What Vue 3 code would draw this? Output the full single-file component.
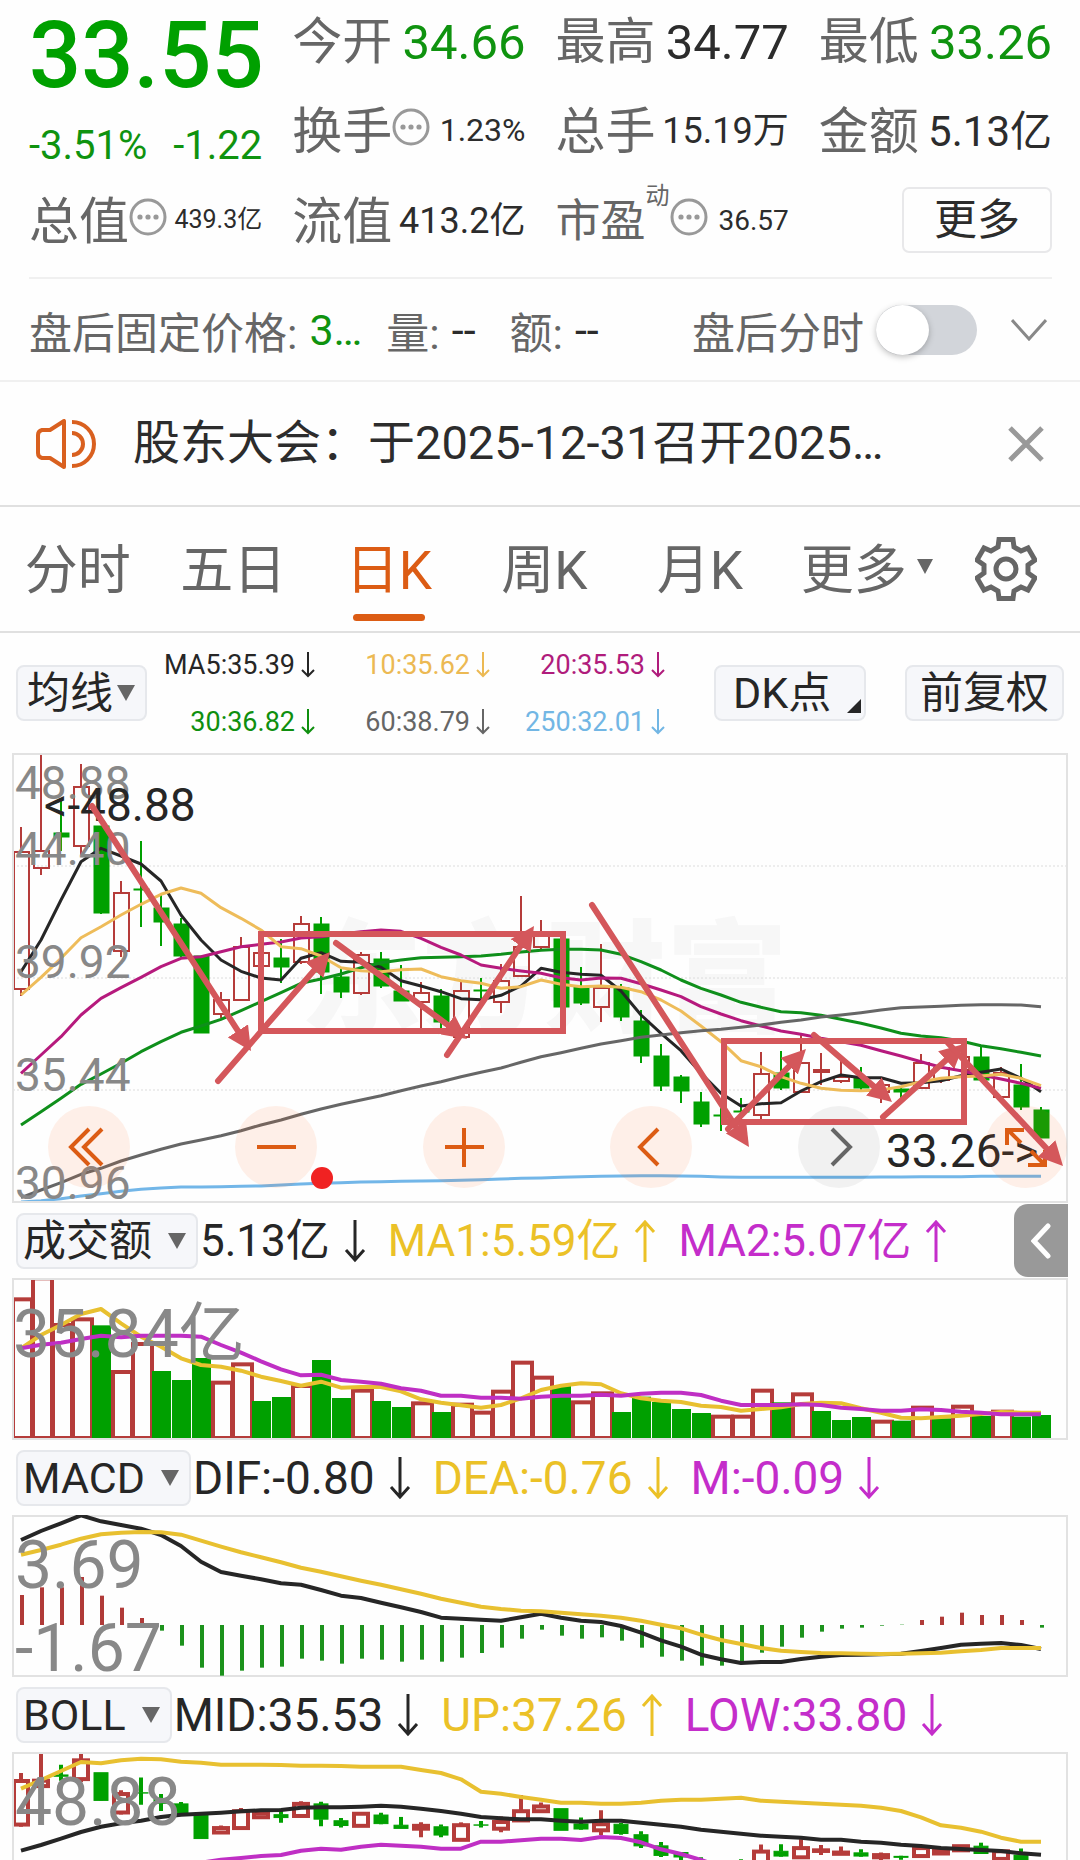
<script setup>
import { ref } from 'vue'

const stepX = (i) => 21 + 20 * i
const line = (values, top) =>
  values.map((v, i) => `${stepX(i)},${(top + v / 3).toFixed(1)}`).join(' ')

const quotes = [
  { label: '今开', value: '34.66', size: 'xl', down: true },
  { label: '最高', value: '34.77', size: 'xl' },
  { label: '最低', value: '33.26', size: 'xl', down: true },
  { label: '换手', value: '1.23%', size: 'm', info: true },
  { label: '总手', value: '15.19万', size: 'l' },
  { label: '金额', value: '5.13亿', size: 'ml' },
  { label: '总值', value: '439.3亿', size: 's', info: true },
  { label: '流值', value: '413.2亿', size: 'l' },
  { label: '市盈', value: '36.57', size: 'sm', info: true, sup: '动' },
]

const afterHours = ref(false)
const tabs = ['分时', '五日', '日K', '周K', '月K']
const activeTab = ref('日K')

const averages = [
  { text: 'MA5:35.39', color: '#262626' },
  { text: '10:35.62', color: '#ecb953' },
  { text: '20:35.53', color: '#b01c7c' },
  { text: '30:36.82', color: '#0f8f0f' },
  { text: '60:38.79', color: '#666666' },
  { text: '250:32.01', color: '#72b6e4' },
]

// [rising, high, body top, body bottom, low]
const candles = [
  [1, 827, 852, 989, 996], [1, 754, 851, 868, 875], [0, 801, 833, 837, 851], [1, 764, 787, 846, 855],
  [0, 826, 826, 913, 914], [1, 881, 893, 951, 957], [0, 841, 889, 890, 927], [0, 893, 908, 922, 946],
  [0, 918, 924, 956, 957], [0, 956, 956, 1033, 1033], [1, 992, 1000, 1014, 1018], [1, 937, 947, 1000, 1000],
  [1, 948, 953, 966, 968], [0, 939, 958, 967, 983], [1, 916, 924, 962, 964], [0, 917, 924, 972, 994],
  [0, 968, 977, 992, 998], [1, 952, 955, 993, 995], [0, 952, 959, 986, 988], [0, 965, 991, 1001, 1001],
  [1, 982, 993, 1002, 1029], [0, 989, 996, 1022, 1029], [1, 982, 991, 1037, 1037], [0, 978, 990, 991, 998],
  [1, 964, 981, 1002, 1013], [1, 896, 947, 976, 976], [1, 920, 932, 947, 949], [0, 939, 939, 1007, 1007],
  [0, 967, 987, 1003, 1005], [1, 944, 988, 1007, 1022], [0, 984, 988, 1017, 1021], [0, 1010, 1021, 1056, 1063],
  [0, 1044, 1056, 1086, 1091], [0, 1075, 1077, 1091, 1103], [0, 1092, 1102, 1124, 1127], [0, 1105, 1115, 1116, 1131],
  [0, 1098, 1111, 1112, 1122], [1, 1052, 1074, 1115, 1119], [0, 1051, 1073, 1088, 1090], [1, 1035, 1063, 1092, 1093],
  [1, 1053, 1070, 1072, 1085], [1, 1058, 1077, 1081, 1083], [0, 1067, 1078, 1088, 1090], [1, 1077, 1085, 1092, 1103],
  [0, 1087, 1089, 1092, 1100], [1, 1054, 1063, 1088, 1088], [1, 1065, 1068, 1080, 1083], [1, 1055, 1057, 1070, 1070],
  [0, 1046, 1057, 1080, 1080], [1, 1067, 1073, 1097, 1097], [0, 1064, 1085, 1107, 1110], [0, 1107, 1110, 1138, 1138],
].map(([up, ...y]) => ({ up, y }))
const bollCandles = candles.map((c) => ({ up: c.up, y: c.y.map((v) => 1781 + (v - 852) * 0.318) }))

const priceLines = [
  { color: '#262626', v: [695, 600, 480, 365, 325, 348, 372, 423, 525, 600, 660, 694, 714, 720, 655, 638, 664, 667, 682, 722, 738, 755, 776, 779, 766, 738, 685, 697, 703, 706, 753, 825, 880, 932, 1000, 1060, 1098, 1091, 1088, 1053, 1025, 1005, 1013, 1013, 1030, 1028, 1022, 1007, 997, 987, 1015, 1055] },
  { color: '#0f8f1b', v: [1155, 1115, 1075, 1033, 1002, 970, 935, 905, 877, 858, 838, 812, 785, 758, 730, 717, 702, 683, 668, 660, 653, 652, 650, 648, 643, 636, 631, 628, 628, 630, 643, 665, 690, 720, 745, 765, 787, 802, 815, 818, 826, 838, 850, 864, 880, 888, 893, 903, 917, 926, 937, 948] },
  { color: '#b61a7d', v: [1000, 945, 890, 825, 775, 743, 712, 680, 655, 650, 635, 620, 613, 606, 594, 590, 582, 575, 570, 574, 595, 622, 645, 675, 685, 693, 700, 713, 720, 714, 715, 731, 750, 770, 800, 822, 842, 858, 873, 883, 895, 905, 916, 932, 948, 965, 982, 992, 1005, 1017, 1030, 1045] },
  { color: '#eebc5a', v: [765, 712, 655, 593, 560, 525, 493, 463, 444, 460, 503, 535, 570, 620, 626, 648, 683, 692, 695, 689, 687, 710, 722, 730, 745, 740, 720, 733, 740, 738, 742, 755, 780, 813, 858, 905, 962, 980, 1010, 1030, 1045, 1051, 1052, 1050, 1040, 1025, 1015, 1010, 1008, 1003, 1015, 1037] },
  { color: '#666666', v: [1373, 1350, 1328, 1303, 1285, 1263, 1245, 1228, 1212, 1200, 1187, 1172, 1155, 1140, 1123, 1107, 1093, 1080, 1067, 1052, 1038, 1025, 1010, 997, 984, 967, 950, 938, 925, 912, 902, 892, 885, 878, 872, 868, 862, 855, 847, 840, 831, 825, 818, 810, 803, 801, 799, 796, 794, 794, 795, 800] },
  { color: '#72b6e8', v: [1386, 1382, 1376, 1368, 1361, 1354, 1348, 1344, 1341, 1341, 1340, 1339, 1338, 1335, 1332, 1330, 1328, 1326, 1325, 1324, 1323, 1322, 1321, 1319, 1317, 1315, 1314, 1312, 1310, 1309, 1308, 1307, 1307, 1308, 1309, 1311, 1312, 1312, 1312, 1312, 1312, 1312, 1312, 1311, 1311, 1310, 1310, 1310, 1309, 1309, 1309, 1309] },
]
const priceScale = [
  ['48.88', 799], ['44.40', 865], ['39.92', 978], ['35.44', 1091], ['30.96', 1199],
]

const risingVolume = new Set([0, 1, 2, 3, 5, 6, 10, 11, 14, 17, 20, 22, 23, 24, 25, 26, 28, 29, 35, 36, 37, 39, 43, 45, 47, 49])
const volumes = [298, 235, 375, 358, 376, 516, 432, 513, 540, 474, 548, 493, 603, 591, 558, 480, 594, 572, 603, 621, 610, 636, 614, 638, 575, 488, 533, 558, 607, 580, 636, 590, 606, 627, 639, 650, 650, 572, 607, 583, 633, 660, 651, 665, 662, 623, 655, 620, 648, 635, 650, 645]
  .map((v, i) => ({ up: risingVolume.has(i), top: 1200 + v / 3 }))
const volumeLines = [
  { color: '#e8c030', v: [445, 405, 375, 342, 327, 370, 410, 440, 475, 495, 500, 512, 530, 543, 557, 545, 563, 561, 561, 574, 598, 608, 616, 623, 615, 595, 570, 557, 550, 553, 580, 595, 602, 606, 617, 621, 632, 627, 622, 612, 608, 610, 625, 638, 653, 655, 651, 647, 642, 636, 638, 638] },
  { color: '#bf2fc4', v: [445, 434, 428, 417, 407, 412, 407, 407, 407, 410, 435, 458, 484, 508, 526, 524, 540, 545, 551, 565, 572, 587, 587, 593, 593, 596, 590, 587, 587, 584, 587, 581, 578, 578, 585, 602, 615, 615, 615, 613, 615, 623, 627, 632, 632, 628, 630, 635, 638, 643, 643, 643] },
]

const macdBars = [285, 262, 262, 231, 287, 323, 354, 392, 437, 503, 527, 512, 503, 500, 476, 482, 491, 476, 479, 485, 479, 485, 473, 459, 443, 416, 389, 407, 416, 412, 422, 443, 470, 482, 497, 497, 489, 458, 440, 413, 395, 386, 383, 377, 374, 360, 350, 338, 345, 345, 360, 383]
const macdLines = [
  { color: '#262626', v: [120, 93, 70, 46, 64, 75, 86, 105, 138, 185, 216, 227, 238, 250, 254, 270, 287, 294, 308, 322, 336, 353, 356, 359, 362, 352, 341, 353, 362, 366, 378, 398, 421, 440, 464, 478, 489, 486, 486, 477, 470, 465, 464, 463, 461, 453, 444, 434, 431, 429, 435, 447] },
  { color: '#e8c030', v: [164, 150, 134, 116, 103, 98, 96, 97, 104, 122, 140, 157, 172, 187, 203, 215, 229, 242, 254, 268, 281, 296, 308, 320, 327, 332, 334, 338, 343, 347, 353, 362, 374, 385, 404, 420, 432, 444, 452, 456, 459, 460, 461, 462, 461, 460, 458, 454, 450, 444, 444, 444] },
]
const bollLines = [
  { color: '#262626', v: [1052, 1035, 1016, 996, 980, 970, 962, 951, 944, 941, 938, 934, 931, 930, 923, 922, 922, 920, 917, 920, 926, 933, 941, 951, 955, 958, 958, 962, 965, 962, 962, 968, 974, 980, 989, 995, 1001, 1007, 1010, 1013, 1019, 1019, 1025, 1028, 1034, 1038, 1044, 1047, 1050, 1053, 1060, 1064] },
  { color: '#e8c030', v: [866, 840, 813, 786, 790, 781, 776, 778, 785, 788, 794, 794, 794, 795, 797, 797, 798, 800, 800, 800, 810, 819, 838, 875, 881, 891, 899, 908, 908, 911, 911, 908, 902, 899, 899, 896, 893, 902, 905, 908, 911, 914, 917, 923, 933, 952, 976, 983, 995, 1013, 1025, 1025] },
  { color: '#bf2fc4', v: [1160, 1150, 1142, 1134, 1126, 1118, 1110, 1102, 1096, 1088, 1079, 1074, 1068, 1065, 1052, 1046, 1049, 1040, 1034, 1037, 1040, 1046, 1046, 1025, 1025, 1021, 1016, 1016, 1020, 1011, 1014, 1027, 1048, 1062, 1080, 1100] },
]

// start point and arrow tip; the shaft stops inside the arrow head
const headLength = 24
const trends = [
  [92, 806, 251, 1051], [218, 1081, 330, 952], [336, 943, 467, 1039], [447, 1055, 534, 926],
  [592, 905, 749, 1147], [728, 1129, 806, 1049], [814, 1035, 892, 1102], [883, 1117, 964, 1044],
  [948, 1043, 1063, 1166],
].map(([x1, y1, x2, y2]) => {
  const k = 1 - headLength / Math.hypot(x2 - x1, y2 - y1)
  return { x1, y1, x2: x1 + (x2 - x1) * k, y2: y1 + (y2 - y1) * k }
})
const controls = [
  { name: '最早', d: 'M41 23 L23 41 L41 59 M54 23 L36 41 L54 59' },
  { name: '缩小', d: 'M22 41 H61' },
  { name: '放大', d: 'M22 41 H61 M41 22 V61' },
  { name: '向左', d: 'M48 23 L30 41 L48 59' },
  { name: '向右', d: 'M34 23 L52 41 L34 59', off: true },
  { name: '全屏', d: 'M22 39 V24 H39 M24 25 L36 37 M60 44 V59 H43 M59 58 L46 45' },
]

const yellow = '#ebc127'
const purple = '#c42dca'
const volumeLegend = [
  { text: '5.13亿', color: '#262626' },
  { text: 'MA1:5.59亿', color: yellow, up: true },
  { text: 'MA2:5.07亿', color: purple, up: true },
]
const macdLegend = [
  { text: 'DIF:-0.80', color: '#262626' },
  { text: 'DEA:-0.76', color: yellow },
  { text: 'M:-0.09', color: purple },
]
const bollLegend = [
  { text: 'MID:35.53', color: '#262626' },
  { text: 'UP:37.26', color: yellow, up: true },
  { text: 'LOW:33.80', color: purple },
]
const arrowUp = 'M11 43 V3 M2 13 L11 3 L20 13'
const arrowDown = 'M11 1 V41 M2 31 L11 41 L20 31'
</script>

<template>
  <main class="page">
    <section class="quote">
      <div class="last">
        <strong class="price">33.55</strong>
        <div class="change"><span>-3.51%</span><span>-1.22</span></div>
      </div>
      <div v-for="q in quotes" :key="q.label" class="cell">
        <span class="label" :class="{ tight: q.sup }">{{ q.label }}</span>
        <sup v-if="q.sup" class="sup">{{ q.sup }}</sup>
        <svg v-if="q.info" class="info" viewBox="0 0 38 38">
          <circle cx="19" cy="19" r="17" fill="none" stroke="#999" stroke-width="3" />
          <circle v-for="x in [11, 19, 27]" :key="x" :cx="x" cy="19" r="2.6" fill="#999" />
        </svg>
        <span class="value" :class="[q.size, { down: q.down }]">{{ q.value }}</span>
      </div>
      <div class="cell more"><button class="more-btn">更多</button></div>
    </section>

    <section class="after">
      <span>盘后固定价格:</span><span class="down first">3…</span>
      <span>量:</span><span class="dash">--</span>
      <span>额:</span><span class="dash">--</span>
      <label class="switch">盘后分时<input v-model="afterHours" type="checkbox" /></label>
      <button class="icon-btn" aria-label="展开">
        <svg width="36" height="24" viewBox="0 0 36 24"><path d="M1 2 L18 21 L35 2" fill="none" stroke="#888" stroke-width="3" /></svg>
      </button>
    </section>

    <section class="news">
      <svg width="62" height="50" viewBox="0 0 62 50" fill="none" stroke="#d9601f" stroke-width="4">
        <path d="M28 2 V48 L14 39 H6 Q2 38 2 34 V16 Q2 12 6 11 H14 Z" stroke-linejoin="round" />
        <path d="M36 14 A11 11 0 0 1 36 36 M36 3 A22 22 0 0 1 36 47" />
      </svg>
      <a href="#" class="headline">股东大会：于2025-12-31召开2025…</a>
      <button class="icon-btn" aria-label="关闭">
        <svg width="36" height="36" viewBox="0 0 36 36"><path d="M2 2 L34 34 M34 2 L2 34" stroke="#999" stroke-width="5" /></svg>
      </button>
    </section>

    <nav class="tabs">
      <button v-for="t in tabs" :key="t" class="tab" :class="{ active: t === activeTab }" @click="activeTab = t">{{ t }}</button>
      <button class="tab tab-more">更多<svg width="16" height="15" viewBox="0 0 16 15"><path d="M0 0 H16 L8 15 Z" fill="#666" /></svg></button>
      <button class="icon-btn" aria-label="设置">
        <svg width="62" height="64" viewBox="-31 -32 62 64" fill="none" stroke="#666" stroke-width="5">
          <path d="M-7 -29.5 H7 L8 -22 L15 -18 L22 -21 L29 -9 L22 -4 V4 L29 9 L22 21 L15 18 L8 22 L7 29.5 H-7 L-8 22 L-15 18 L-22 21 L-29 9 L-22 4 V-4 L-29 -9 L-22 -21 L-15 -18 L-8 -22 Z" />
          <circle r="10" />
        </svg>
      </button>
    </nav>

    <section class="tools">
      <button class="chip avg">均线<svg width="18" height="16" viewBox="0 0 18 16"><path d="M0 0 H18 L9 16 Z" fill="#666" /></svg></button>
      <div class="averages">
        <span v-for="a in averages" :key="a.text" :style="{ color: a.color }">
          {{ a.text }}<svg width="14" height="26" viewBox="0 0 14 26"><path d="M7 0 V24 M1 18 L7 24 L13 18" fill="none" stroke="currentColor" stroke-width="2" /></svg>
        </span>
      </div>
      <button class="chip dk">DK点<svg width="14" height="14" viewBox="0 0 14 14"><path d="M14 0 V14 H0 Z" fill="#262626" /></svg></button>
      <button class="chip adjust">前复权</button>
    </section>

    <section class="panel">
      <svg class="chart" viewBox="12 753 1056 450">
        <text class="watermark" x="300" y="1022">东方财富</text>
        <path class="grid" d="M13 866 H1067 M13 978 H1067 M13 1090 H1067" />
        <g v-for="(c, i) in candles" :key="i" :class="c.up ? 'rise' : 'fall'">
          <path :d="`M${stepX(i)} ${c.y[0]} V${c.y[1]} M${stepX(i)} ${c.y[2]} V${c.y[3]}`" />
          <rect :x="stepX(i) - 7" :y="c.y[1]" width="15" :height="c.y[2] - c.y[1]" />
        </g>
        <polyline v-for="l in priceLines" :key="l.color" class="curve" :points="line(l.v, 740)" :stroke="l.color" />
        <text v-for="s in priceScale" :key="s[0]" class="scale" x="15" :y="s[1]">{{ s[0] }}</text>
        <text class="mark" x="44" y="821">&lt;-48.88</text>
        <text class="mark" x="886" y="1167">33.26-&gt;</text>
        <rect class="frame" x="13" y="754" width="1054" height="448" />
      </svg>
      <div class="controls">
        <button v-for="c in controls" :key="c.name" class="round" :class="{ off: c.off }" :aria-label="c.name">
          <svg width="82" height="82" viewBox="0 0 82 82"><path :d="c.d" fill="none" stroke="currentColor" stroke-width="4" /></svg>
        </button>
      </div>
      <svg class="chart notes" viewBox="12 753 1056 450">
        <defs>
          <marker id="head" markerUnits="userSpaceOnUse" markerWidth="24" markerHeight="24" refX="0" refY="12" orient="auto">
            <path d="M0 0 L24 12 L0 24 Z" fill="#d4575b" />
          </marker>
        </defs>
        <rect x="261" y="934" width="302" height="97" />
        <rect x="724" y="1041" width="240" height="81" />
        <line v-for="(t, i) in trends" :key="i" :x1="t.x1" :y1="t.y1" :x2="t.x2" :y2="t.y2" marker-end="url(#head)" />
        <circle cx="322" cy="1178" r="11" />
      </svg>
    </section>

    <section class="legend amounts">
      <button class="chip">成交额<svg width="18" height="16" viewBox="0 0 18 16"><path d="M0 0 H18 L9 16 Z" fill="#666" /></svg></button>
      <span v-for="l in volumeLegend" :key="l.text" class="item" :style="{ color: l.color }">
        <span>{{ l.text }}</span><svg width="22" height="44" viewBox="0 0 22 44"><path :d="l.up ? arrowUp : arrowDown" /></svg>
      </span>
      <button class="drawer" aria-label="展开侧栏">
        <svg width="20" height="36" viewBox="0 0 20 36"><path d="M17 3 L3 18 L17 33" fill="none" stroke="#fff" stroke-width="5" stroke-linecap="round" /></svg>
      </button>
    </section>
    <svg class="chart lower" viewBox="12 1278 1056 162">
      <template v-for="(b, i) in volumes" :key="i">
        <rect v-if="b.up" class="vol-up" :x="13 + 20 * i" :y="b.top" width="19" :height="1438 - b.top" />
        <rect v-else class="vol-down" :x="12 + 20 * i" :y="b.top" width="19" :height="1438 - b.top" />
      </template>
      <polyline v-for="l in volumeLines" :key="l.color" class="curve" :points="line(l.v, 1200)" :stroke="l.color" />
      <text class="scale big" x="13" y="1357">35.84亿</text>
      <rect class="frame" x="13" y="1279" width="1054" height="160" />
    </svg>

    <section class="legend">
      <button class="chip">MACD<svg width="18" height="16" viewBox="0 0 18 16"><path d="M0 0 H18 L9 16 Z" fill="#666" /></svg></button>
      <span v-for="l in macdLegend" :key="l.text" class="item" :style="{ color: l.color }">
        <span>{{ l.text }}</span><svg width="22" height="44" viewBox="0 0 22 44"><path :d="l.up ? arrowUp : arrowDown" /></svg>
      </span>
    </section>
    <svg class="chart lower" viewBox="12 1515 1056 162">
      <rect class="frame" x="13" y="1516" width="1054" height="160" />
      <line v-for="(b, i) in macdBars" :key="i" :x1="stepX(i) + 1" :x2="stepX(i) + 1" y1="1625" :y2="1500 + b / 3" :stroke="b < 374 ? '#b03a38' : '#1c921c'" stroke-width="4" />
      <polyline v-for="l in macdLines" :key="l.color" class="curve" :points="line(l.v, 1500)" :stroke="l.color" />
      <text class="scale big" x="15" y="1588">3.69</text>
      <text class="scale big" x="15" y="1671">-1.67</text>
    </svg>

    <section class="legend">
      <button class="chip">BOLL<svg width="18" height="16" viewBox="0 0 18 16"><path d="M0 0 H18 L9 16 Z" fill="#666" /></svg></button>
      <span v-for="l in bollLegend" :key="l.text" class="item" :style="{ color: l.color }">
        <span>{{ l.text }}</span><svg width="22" height="44" viewBox="0 0 22 44"><path :d="l.up ? arrowUp : arrowDown" /></svg>
      </span>
    </section>
    <svg class="chart lower" viewBox="12 1752 1056 108">
      <g v-for="(c, i) in bollCandles" :key="i" class="thick" :class="c.up ? 'rise' : 'fall'">
        <path :d="`M${stepX(i)} ${c.y[0]} V${c.y[1]} M${stepX(i)} ${c.y[2]} V${c.y[3]}`" />
        <rect :x="stepX(i) - 7" :y="c.y[1]" width="14" :height="c.y[2] - c.y[1]" />
      </g>
      <polyline v-for="l in bollLines" :key="l.color" class="curve" :points="line(l.v, 1500)" :stroke="l.color" />
      <text class="scale big" x="15" y="1825">48.88</text>
      <path class="frame" d="M13 1860 V1753 H1067 V1860" />
    </svg>
  </main>
</template>

<style>
body {
  margin: 0;
  background: #fefefe;
}
</style>

<style scoped>
.page {
  font-family: Roboto, "Noto Sans CJK SC", sans-serif;
  color: #666;
  overflow: hidden;
}
button {
  font: inherit;
  color: inherit;
  background: none;
  border: 0;
  padding: 0;
  margin: 0;
}
svg {
  display: block;
  flex: none;
}
.down {
  color: #0f930f;
}

.quote {
  margin: 0 28px 0 29px;
  padding-bottom: 17px;
  border-bottom: 2px solid #f0f0f0;
  display: grid;
  grid-template-columns: repeat(4, minmax(0, 1fr));
  grid-auto-rows: 80px;
  gap: 10px 30px;
}
.last {
  grid-row: span 2;
  color: #00a000;
}
.price {
  display: block;
  font-size: 92px;
  font-weight: 500;
  line-height: 112px;
}
.change {
  display: flex;
  justify-content: space-between;
  font-size: 40px;
  line-height: 68px;
  color: #0f930f;
}
.cell {
  display: flex;
  align-items: center;
  white-space: nowrap;
}
.label {
  padding-bottom: 6px;
  font-size: 50px;
}
.label.tight {
  font-size: 45px;
}
.sup {
  font-size: 24px;
  line-height: 32px;
  align-self: flex-start;
}
.info {
  width: 38px;
  height: 38px;
  margin-bottom: 6px;
}
.value {
  margin-left: auto;
  color: #2c2c2c;
}
.value.down {
  color: #0f930f;
}
.xl {
  font-size: 49px;
  padding-top: 4px;
}
.ml,
.l,
.s {
  padding-bottom: 6px;
}
.ml { font-size: 42px; }
.l { font-size: 36px; }
.m { font-size: 32px; }
.sm { font-size: 28px; }
.s { font-size: 25px; }
.more {
  justify-content: flex-end;
}
.more-btn {
  width: 150px;
  height: 66px;
  border: 2px solid #e8e8ea;
  border-radius: 7px;
  font-size: 43px;
  line-height: 60px;
  color: #2c2c2c;
}

.after {
  height: 101px;
  padding: 0 33px 0 29px;
  display: flex;
  align-items: center;
  gap: 12px;
  font-size: 43px;
  white-space: nowrap;
  border-bottom: 2px solid #f0f0f0;
}
.after .first {
  margin-right: 12px;
}
.dash {
  color: #2c2c2c;
  margin-right: 22px;
}
.switch {
  margin-left: auto;
  display: flex;
  align-items: center;
  gap: 12px;
}
.switch input {
  appearance: none;
  margin: 0 22px 0 0;
  width: 101px;
  height: 50px;
  border-radius: 25px;
  background: #d2d5da;
}
.switch input::before {
  content: "";
  display: block;
  width: 53px;
  height: 50px;
  border-radius: 50%;
  background: #fff;
  box-shadow: 0 2px 6px rgba(0, 0, 0, 0.25);
}
.switch input:checked::before {
  margin-left: auto;
}

.news {
  height: 123px;
  padding: 0 36px;
  display: flex;
  align-items: center;
  border-bottom: 2px solid #e0e0e0;
}
.headline {
  flex: 1;
  margin-left: 35px;
  padding-bottom: 10px;
  font-size: 47px;
  white-space: nowrap;
  color: #2c2c2c;
  text-decoration: none;
}

.tabs {
  height: 124px;
  padding-right: 43px;
  display: flex;
  align-items: center;
  border-bottom: 2px solid #e0e0e0;
}
.tab {
  position: relative;
  flex: 0 0 15%;
  height: 100%;
  padding-bottom: 6px;
  font-size: 53px;
  white-space: nowrap;
}
.tab.active {
  color: #dc5c14;
}
.tab.active::after {
  content: "";
  position: absolute;
  left: 50%;
  bottom: 10px;
  width: 72px;
  height: 7px;
  margin-left: -36px;
  border-radius: 4px;
  background: #dc5c14;
}
.tab-more {
  flex: 1;
  padding-left: 23px;
  display: flex;
  align-items: center;
  gap: 10px;
}

.tools {
  height: 120px;
  padding: 0 16px;
  display: flex;
  align-items: center;
}
.chip {
  box-sizing: border-box;
  height: 56px;
  padding: 0 10px 0 5px;
  display: flex;
  align-items: center;
  gap: 16px;
  font-size: 43px;
  line-height: 50px;
  white-space: nowrap;
  color: #262626;
  background: #f6f7fa;
  border: 2px solid #e6e8ec;
  border-radius: 8px;
}
.avg {
  gap: 4px;
  padding: 0 10px 0 9px;
}
.averages {
  margin-left: 18px;
  display: grid;
  grid-template-columns: repeat(3, 150px);
  gap: 17px 25px;
  font-size: 27px;
  line-height: 40px;
}
.averages span {
  display: flex;
  justify-content: flex-end;
  align-items: center;
  gap: 6px;
  white-space: nowrap;
}
.dk {
  margin-left: auto;
  width: 152px;
  padding: 0 5px 0 17px;
  justify-content: space-between;
}
.dk svg {
  align-self: flex-end;
  margin-bottom: 6px;
}
.adjust {
  margin-left: 39px;
  padding: 0 13px;
}

.panel {
  position: relative;
}
.chart {
  width: calc(100% - 24px);
  height: auto;
  margin: 0 12px;
}
.frame {
  fill: none;
  stroke: #e2e2e2;
  stroke-width: 2;
}
.grid {
  stroke: #dcdcdc;
  stroke-width: 1;
  stroke-dasharray: 2 2;
}
.curve {
  fill: none;
  stroke-width: 3;
  stroke-linejoin: round;
}
.lower .curve {
  stroke-width: 4;
}
.rise {
  fill: none;
  stroke: #b53c3a;
  stroke-width: 2;
}
.fall {
  fill: #00a000;
  stroke: #00a000;
  stroke-width: 2;
}
.fall rect {
  stroke-width: 1;
}
.thick {
  stroke-width: 4;
}
.vol-up {
  fill: #fefefe;
  stroke: #b53c3a;
  stroke-width: 4;
}
.vol-down {
  fill: #00a000;
}
.scale {
  font-size: 46px;
  fill: #888;
}
.scale.big {
  font-size: 66px;
}
.mark {
  font-size: 46px;
  fill: #262626;
}
.watermark {
  font-size: 122px;
  font-weight: 900;
  fill: #f7f7f7;
}
.controls {
  position: absolute;
  left: 48px;
  right: 13px;
  bottom: 15px;
  display: flex;
  justify-content: space-between;
}
.round {
  width: 82px;
  height: 82px;
  border-radius: 50%;
  color: #dc5c14;
  background: rgba(255, 110, 40, 0.1);
}
.round.off {
  color: #666;
  background: rgba(0, 0, 0, 0.05);
}
.notes {
  position: absolute;
  left: 0;
  top: 0;
  pointer-events: none;
}
.notes rect,
.notes line {
  fill: none;
  stroke: #d4575b;
  stroke-width: 6;
  stroke-linecap: round;
}
.notes circle {
  fill: #f02222;
}

.legend {
  position: relative;
  height: 75px;
  padding-left: 16px;
  display: flex;
  align-items: center;
}
.item {
  display: flex;
  align-items: center;
  gap: 14px;
  margin-left: 2px;
  font-size: 46px;
  white-space: nowrap;
}
.item + .item {
  margin-left: 22px;
}
.amounts .item {
  font-size: 44px;
}
.amounts .item span {
  padding-bottom: 8px;
}
.item path {
  fill: none;
  stroke: currentColor;
  stroke-width: 3;
}
.drawer {
  margin: 0 12px 0 auto;
  width: 54px;
  height: 73px;
  display: flex;
  align-items: center;
  justify-content: center;
  background: #999;
  border-radius: 14px 0 0 14px;
}
</style>
